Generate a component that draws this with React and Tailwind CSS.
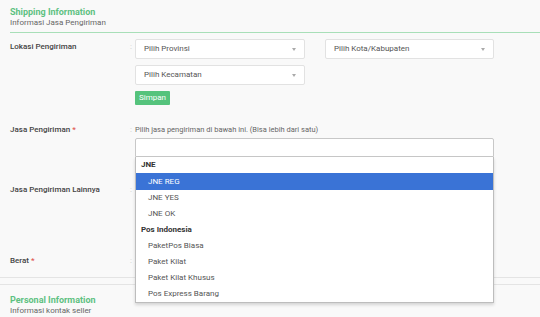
export default function App() {
  const Arrow = () => (
    <span className="w-0 h-0 border-l-[2px] border-r-[2px] border-t-[3px] border-l-transparent border-r-transparent border-t-[#aaa]" />
  );
  const Select = ({ label, w }) => (
    <div className={`${w} h-[20px] bg-white border border-[#e2e2e2] rounded-[2px] flex items-center justify-between pl-[8px] pr-[8px] text-[8px] text-[#555]`}>
      <span>{label}</span>
      <Arrow />
    </div>
  );
  const items = [
    { t: "JNE", g: true },
    { t: "JNE REG", hl: true },
    { t: "JNE YES" },
    { t: "JNE OK" },
    { t: "Pos Indonesia", g: true },
    { t: "PaketPos Biasa" },
    { t: "Paket Kilat" },
    { t: "Paket Kilat Khusus" },
    { t: "Pos Express Barang" },
  ];
  return (
    <div className="w-[540px] h-[317px] overflow-hidden bg-[#f9f9f9] font-['Roboto',sans-serif] text-[#555]">
      <div className="pl-[10px]">
        <div className="pt-[7px] pb-[4px] border-b border-[#a8dfb8]">
          <div className="text-[9px] font-bold text-[#5ec181] leading-[11px]">Shipping Information</div>
          <div className="text-[8px] text-[#666] leading-[10px]">Informasi Jasa Pengiriman</div>
        </div>

        {/* Lokasi */}
        <div className="flex mt-[6px]">
          <div className="w-[120px] pt-[2px] leading-[12px] text-[8px] font-medium text-[#444]">Lokasi Pengiriman</div>
          <div className="w-[5px] pt-[2px] leading-[12px] text-[8px] text-[#ccc]">:</div>
          <div className="flex flex-col gap-[6px]">
            <div className="flex gap-[20px]">
              <Select label="Pilih Provinsi" w="w-[170px]" />
              <Select label="Pilih Kota/Kabupaten" w="w-[169px]" />
            </div>
            <Select label="Pilih Kecamatan" w="w-[170px]" />
            <div className="w-[35px] h-[14px] bg-[#55c37c] rounded-[1px] text-white text-[8px] leading-[14px] text-center">Simpan</div>
          </div>
        </div>

        {/* Jasa */}
        <div className="flex mt-[20px]">
          <div className="w-[120px] leading-[10px] text-[8px] font-medium text-[#444]">Jasa Pengiriman <span className="text-[#e0554f]">*</span></div>
          <div className="w-[5px] leading-[10px] text-[8px] text-[#ccc]">:</div>
          <div className="flex flex-col">
            <div className="leading-[10px] text-[7.5px] text-[#666]">Pilih jasa pengiriman di bawah ini. (Bisa lebih dari satu)</div>
            <div className="relative mt-[3px] w-[359px] h-[19px] bg-white border border-[#c8c8c8] rounded-t-[2px]">
              <div className="absolute left-[-1px] top-[18px] w-[359px] bg-white border border-t-0 border-[#bdbdbd] shadow-[0_2px_3px_rgba(0,0,0,0.15)] z-10">
                {items.map((it) => (
                  <div
                    key={it.t}
                    className={`h-[16px] flex items-center text-[8px] ${it.g ? "pl-[5px] font-bold text-[#333]" : "pl-[12px] text-[#555]"} ${it.hl ? "bg-[#3a73d6] !text-white h-[17px]" : ""}`}
                  >
                    {it.t}
                  </div>
                ))}
              </div>
            </div>
          </div>
        </div>

        {/* Lainnya */}
        <div className="flex mt-[28px]">
          <div className="w-[120px] leading-[10px] text-[8px] font-medium text-[#444]">Jasa Pengiriman Lainnya</div>
          <div className="w-[5px] leading-[10px] text-[8px] text-[#ccc]">:</div>
        </div>

        {/* Berat */}
        <div className="flex mt-[61px]">
          <div className="w-[120px] leading-[10px] text-[8px] font-medium text-[#444]">Berat <span className="text-[#e0554f]">*</span></div>
          <div className="w-[5px] leading-[10px] text-[8px] text-[#ccc]">:</div>
        </div>

        <div className="-ml-[10px] mt-[11px] h-[8px] border-t border-b border-[#e4e4e4]" />

        <div className="mt-[10px]">
          <div className="text-[9px] font-bold text-[#5ec181] leading-[11px]">Personal Information</div>
          <div className="text-[8px] text-[#666] leading-[10px]">Informasi kontak seller</div>
        </div>
      </div>
    </div>
  );
}
